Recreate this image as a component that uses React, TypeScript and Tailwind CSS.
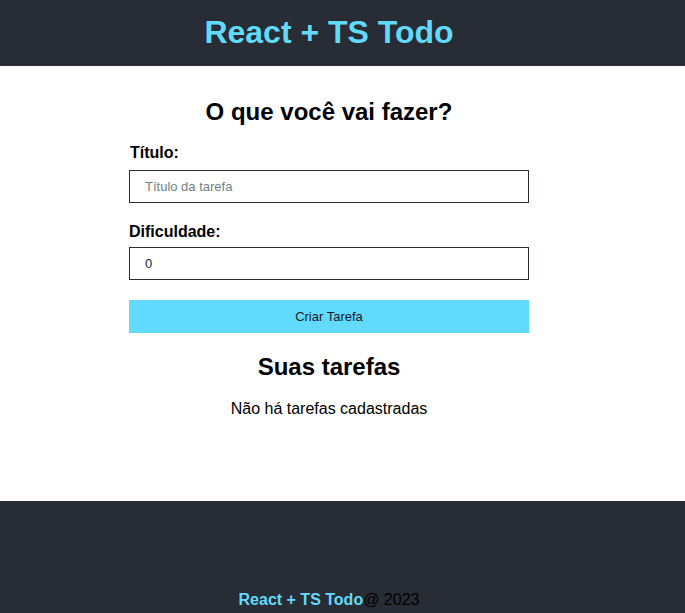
import React from "react";

export default function App() {
  return (
    <div className="min-h-[613px] bg-white" style={{ fontFamily: '"Liberation Sans", Arial, sans-serif' }}>
      <header className="bg-[#282c34] h-[66px] w-full">
        <div className="w-[658px] h-full flex items-center justify-center pb-[3px]">
          <h1 className="text-[32px] font-bold text-[#61dafb] leading-none">React + TS Todo</h1>
        </div>
      </header>
      <main className="w-[658px] h-[435px] flex flex-col items-center pt-[32px]">
        <h2 className="text-[24px] font-bold leading-[28px] text-black">O que você vai fazer?</h2>
        <form className="w-[400px] flex flex-col mt-[18px]">
          <label className="text-[16px] font-bold leading-[18px] ml-[1px]">Título:</label>
          <input
            className="mt-[8px] h-[33px] border border-[#282c34] px-[15px] text-[13px] placeholder:text-[#6f7f7f] outline-none"
            placeholder="Título da tarefa"
          />
          <label className="mt-[20px] text-[16px] font-bold leading-[18px]">Dificuldade:</label>
          <input
            className="mt-[6px] h-[33px] border border-[#282c34] px-[15px] text-[13px] text-[#1a1a40] outline-none"
            defaultValue="0"
          />
          <button type="button" className="mt-[20px] h-[33px] bg-[#61dafb] text-[13px] text-[#1a1a2e]">
            Criar Tarefa
          </button>
        </form>
        <h2 className="mt-[20px] text-[24px] font-bold leading-[28px]">Suas tarefas</h2>
        <p className="mt-[19px] text-[16px] leading-[18px]">Não há tarefas cadastradas</p>
      </main>
      <footer className="bg-[#282c34] h-[112px] w-full">
        <div className="w-[658px] flex justify-center pt-[90px]">
          <p className="text-[16px] leading-[18px]">
            <span className="text-[#61dafb] font-bold">React + TS Todo</span>
            <span className="text-black">@ 2023</span>
          </p>
        </div>
      </footer>
    </div>
  );
}
